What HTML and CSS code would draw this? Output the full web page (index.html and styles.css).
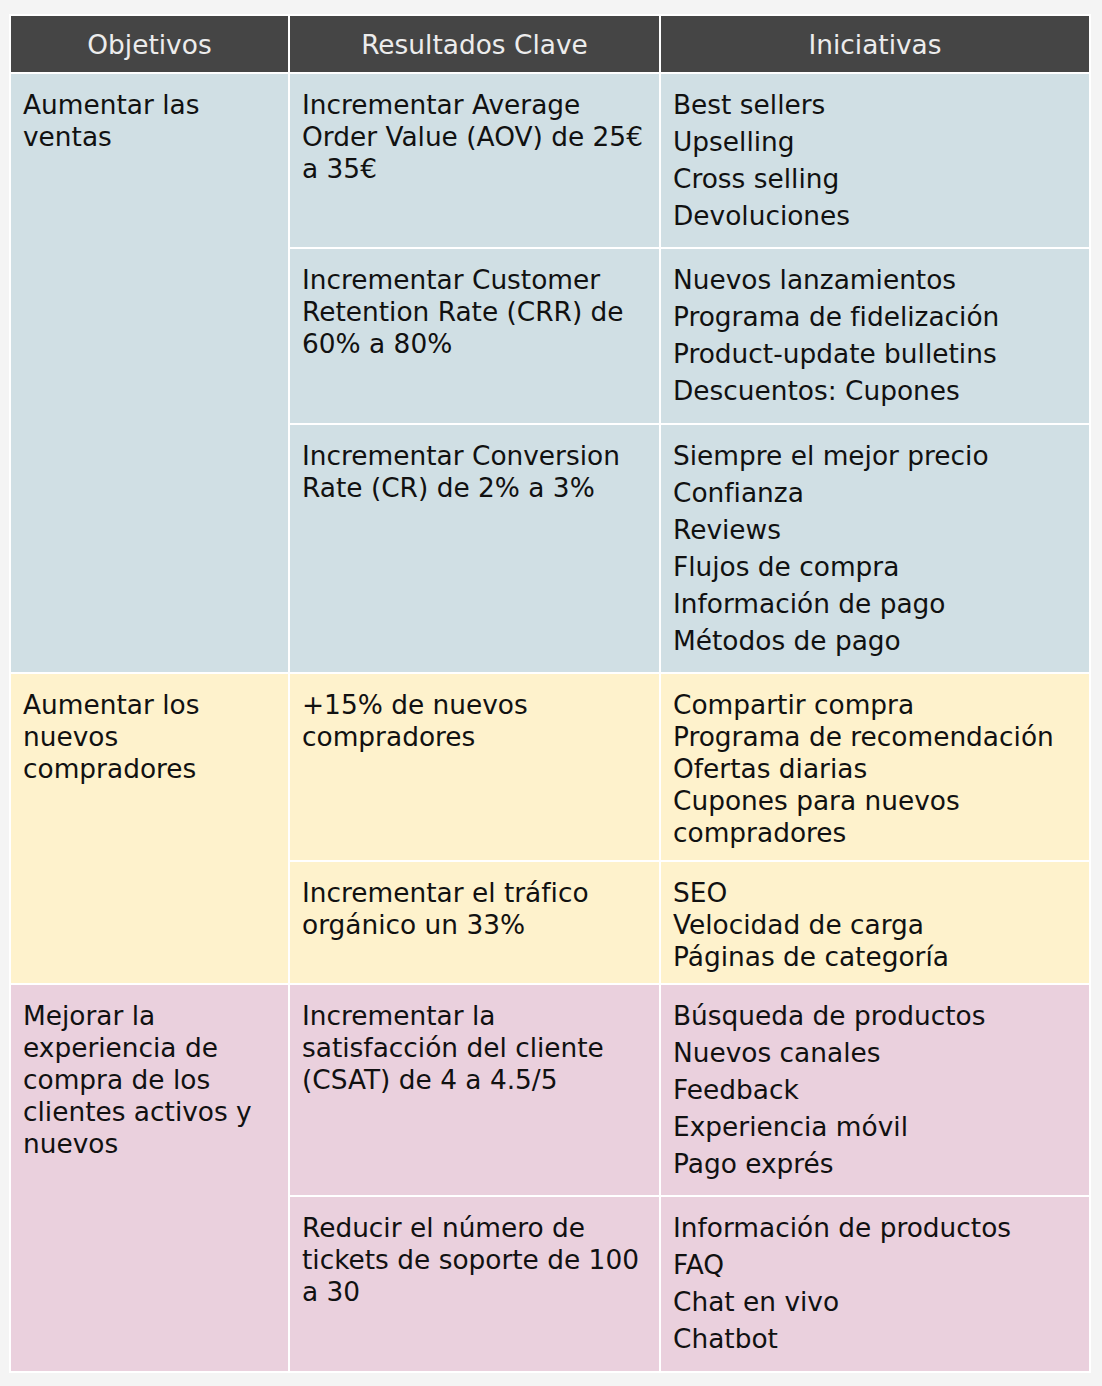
FILE: index.html
```html
<!DOCTYPE html>
<html lang="es">
<head>
<meta charset="utf-8">
<title>OKRs</title>
<link rel="stylesheet" href="styles.css">
</head>
<body>
<table class="okr">
  <colgroup>
    <col class="c1"><col class="c2"><col class="c3">
  </colgroup>
  <thead>
    <tr>
      <th>Objetivos</th>
      <th>Resultados Clave</th>
      <th>Iniciativas</th>
    </tr>
  </thead>
  <tbody>
    <tr class="blue">
      <td rowspan="3">Aumentar las<br>ventas</td>
      <td>Incrementar Average<br>Order Value (AOV) de 25€<br>a 35€</td>
      <td>
        <div class="item">Best sellers</div>
        <div class="item">Upselling</div>
        <div class="item">Cross selling</div>
        <div class="item">Devoluciones</div>
      </td>
    </tr>
    <tr class="blue">
      <td>Incrementar Customer<br>Retention Rate (CRR) de<br>60% a 80%</td>
      <td>
        <div class="item">Nuevos lanzamientos</div>
        <div class="item">Programa de fidelización</div>
        <div class="item">Product-update bulletins</div>
        <div class="item">Descuentos: Cupones</div>
      </td>
    </tr>
    <tr class="blue">
      <td>Incrementar Conversion<br>Rate (CR) de 2% a 3%</td>
      <td>
        <div class="item">Siempre el mejor precio</div>
        <div class="item">Confianza</div>
        <div class="item">Reviews</div>
        <div class="item">Flujos de compra</div>
        <div class="item">Información de pago</div>
        <div class="item">Métodos de pago</div>
      </td>
    </tr>
    <tr class="yellow">
      <td rowspan="2">Aumentar los<br>nuevos<br>compradores</td>
      <td>+15% de nuevos<br>compradores</td>
      <td>Compartir compra<br>Programa de recomendación<br>Ofertas diarias<br>Cupones para nuevos<br>compradores</td>
    </tr>
    <tr class="yellow">
      <td>Incrementar el tráfico<br>orgánico un 33%</td>
      <td>SEO<br>Velocidad de carga<br>Páginas de categoría</td>
    </tr>
    <tr class="pink">
      <td rowspan="2">Mejorar la<br>experiencia de<br>compra de los<br>clientes activos y<br>nuevos</td>
      <td>Incrementar la<br>satisfacción del cliente<br>(CSAT) de 4 a 4.5/5</td>
      <td>
        <div class="item">Búsqueda de productos</div>
        <div class="item">Nuevos canales</div>
        <div class="item">Feedback</div>
        <div class="item">Experiencia móvil</div>
        <div class="item">Pago exprés</div>
      </td>
    </tr>
    <tr class="pink">
      <td>Reducir el número de<br>tickets de soporte de 100<br>a 30</td>
      <td>
        <div class="item">Información de productos</div>
        <div class="item">FAQ</div>
        <div class="item">Chat en vivo</div>
        <div class="item">Chatbot</div>
      </td>
    </tr>
  </tbody>
</table>
</body>
</html>
```
FILE: styles.css
```css
html, body {
  margin: 0;
  background: #f4f4f4;
}
body {
  padding: 14px 9px 13px 9px;
  font-family: "DejaVu Sans", "Liberation Sans", sans-serif;
  font-size: 26.4px;
  line-height: 32px;
  color: #111111;
}
.okr {
  width: 1082px;
  table-layout: fixed;
  border-collapse: separate;
  border-spacing: 2px;
  background: #ffffff;
}
.c1 { width: 277px; }
.c2 { width: 369px; }
.c3 { width: 428px; }
.okr th {
  background: #454545;
  color: #ececec;
  font-weight: normal;
  text-align: center;
  padding: 13px 12px 11px 12px;
  height: 32px;
  white-space: nowrap;
}
.okr td {
  vertical-align: top;
  text-align: left;
  padding: 15px 12px 10.4px 12px;
  white-space: nowrap;
}
.blue td { background: #d0dfe4; }
.yellow td { background: #fef2cc; }
.pink td { background: #ead0dd; }
.item {
  margin-bottom: 5px;
}
```
